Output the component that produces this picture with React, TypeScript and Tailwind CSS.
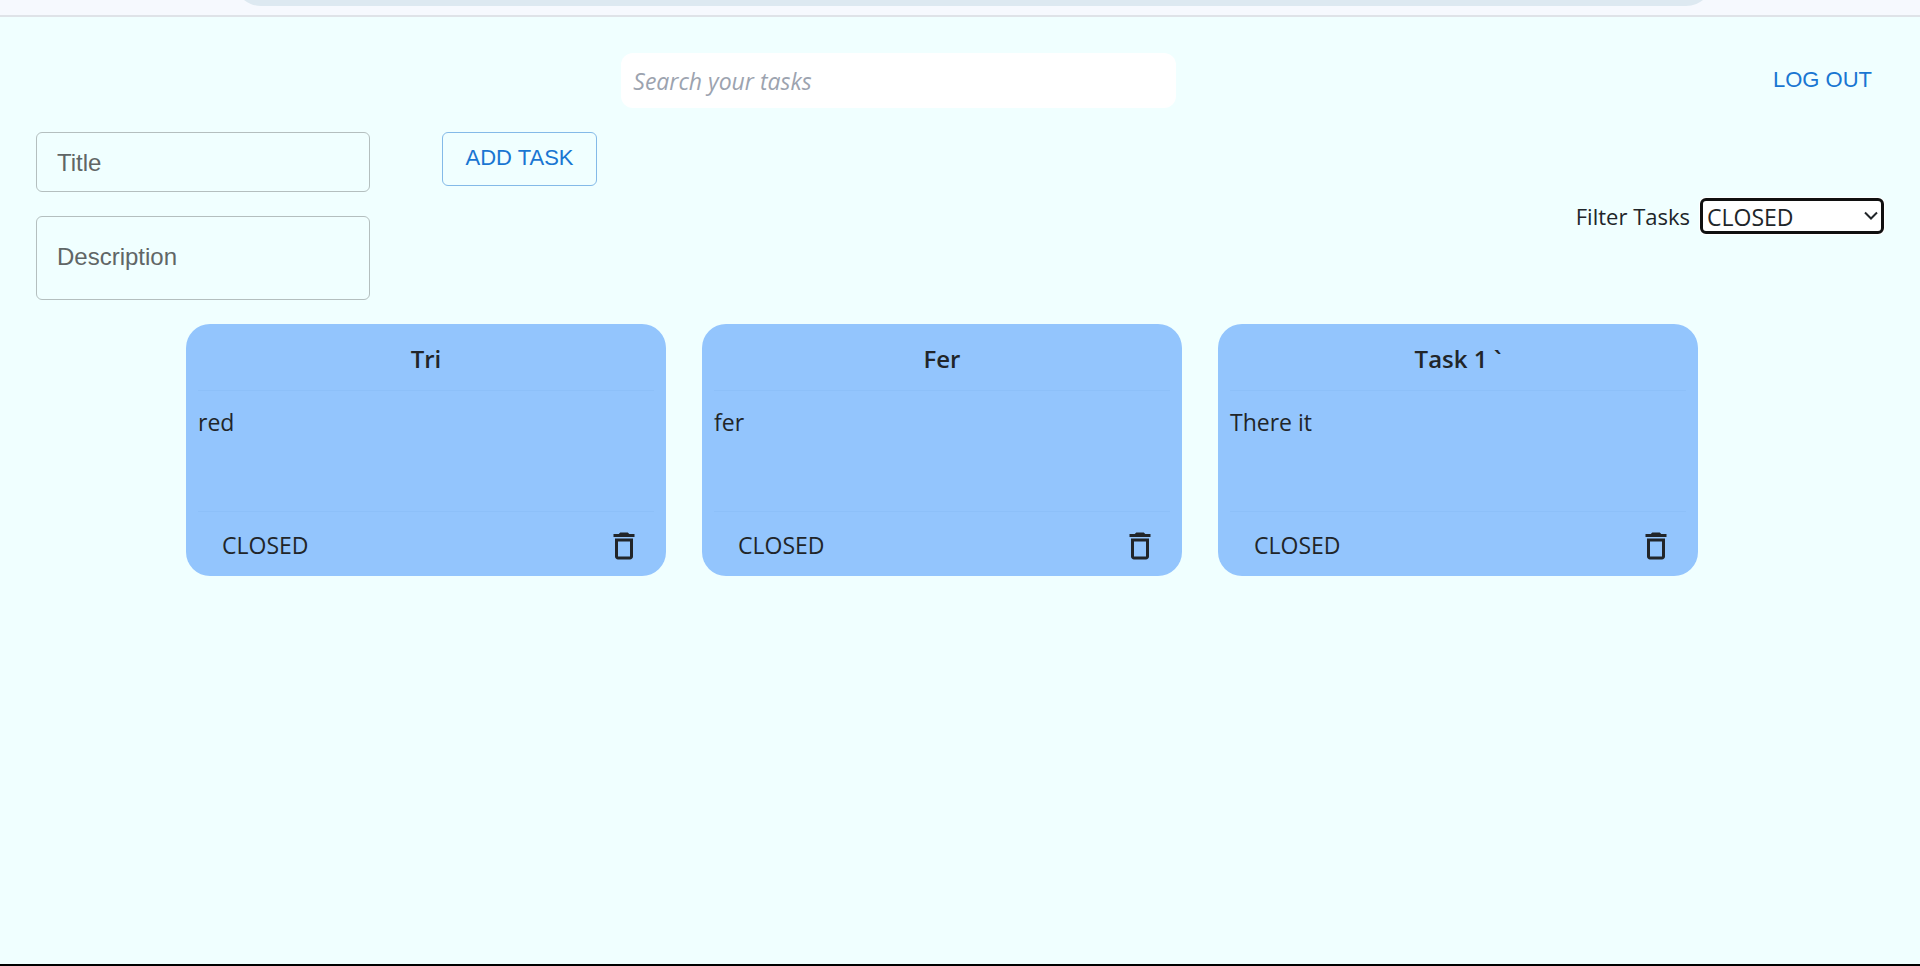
import { useState } from "react";

type Task = { title: string; description: string; status: string };

const initialTasks: Task[] = [
  { title: "Tri", description: "red", status: "CLOSED" },
  { title: "Fer", description: "fer", status: "CLOSED" },
  { title: "Task 1 `", description: "There it", status: "CLOSED" },
];

function TrashIcon() {
  return (
    <svg viewBox="0 0 24 24" fill="currentColor" className="size-9" aria-hidden="true">
      <path d="M6 19c0 1.1.9 2 2 2h8c1.1 0 2-.9 2-2V7H6zM8 9h8v10H8zm7.5-5-1-1h-5l-1 1H5v2h14V4z" />
    </svg>
  );
}

function BrowserEdge() {
  return (
    <div className="h-[17px] border-b-2 border-[#dfe3e8] bg-[#f6f9fe] pr-[207px] pl-[234px]">
      <div className="h-1.5 overflow-hidden">
        <div className="-mt-12 h-[54px] rounded-full bg-[#dde9f1]" />
      </div>
    </div>
  );
}

function TaskCard({ task, onDelete }: { task: Task; onDelete: () => void }) {
  return (
    <article className="flex h-[252px] w-[480px] flex-col rounded-3xl bg-[#93c5fd] px-3">
      <h2 className="flex h-[66px] items-center justify-center pt-1 text-2xl font-semibold">
        {task.title}
      </h2>
      <p className="flex-1 border-y border-[#8dc0f9] pt-[15px] text-[23px] leading-8">{task.description}</p>
      <div className="flex h-16 items-center justify-between pr-3 pl-6 text-[23px] leading-9">
        <span className="pt-0.5">{task.status}</span>
        <button type="button" aria-label="Delete" onClick={onDelete} className="cursor-pointer pt-1">
          <TrashIcon />
        </button>
      </div>
    </article>
  );
}

export default function App() {
  const [tasks, setTasks] = useState(initialTasks);
  const [title, setTitle] = useState("");
  const [description, setDescription] = useState("");
  const [search, setSearch] = useState("");
  const [filter, setFilter] = useState("CLOSED");

  const addTask = () => {
    if (!title) return;
    setTasks([...tasks, { title, description, status: "OPEN" }]);
    setTitle("");
    setDescription("");
  };

  const visible = tasks.filter(
    (t) =>
      (filter === "ALL" || t.status === filter) &&
      t.title.toLowerCase().includes(search.toLowerCase()),
  );

  return (
    <div className="flex min-h-screen flex-col border-b-2 border-black bg-[#f0ffff] font-['Segoe_UI','Open_Sans',sans-serif] text-[#212529]">
      <BrowserEdge />

      <header className="flex items-start justify-between px-9 pt-9">
        <div />
        <input
          type="search"
          aria-label="Search your tasks"
          placeholder="Search your tasks"
          value={search}
          onChange={(e) => setSearch(e.target.value)}
          className="h-[55px] w-3/10 rounded-xl bg-white px-3 text-[23px] outline-none placeholder:text-[#9ca3af] placeholder:italic"
        />
        <button
          type="button"
          className="h-[54px] cursor-pointer px-3 pb-0.5 font-['Liberation_Sans',Arial,sans-serif] text-[22px] text-[#1976d2]"
        >
          LOG OUT
        </button>
      </header>

      <section className="flex items-start justify-between px-9 pt-6">
        <form
          className="flex items-start gap-[72px] font-['Liberation_Sans',Arial,sans-serif]"
          onSubmit={(e) => {
            e.preventDefault();
            addTask();
          }}
        >
          <div className="flex w-[334px] flex-col gap-6">
            <input
              aria-label="Title"
              placeholder="Title"
              value={title}
              onChange={(e) => setTitle(e.target.value)}
              className="h-[60px] rounded-md border border-[#b4bfbf] px-5 pt-0.5 text-2xl outline-none placeholder:text-[#606666]"
            />
            <textarea
              aria-label="Description"
              placeholder="Description"
              rows={1}
              value={description}
              onChange={(e) => setDescription(e.target.value)}
              className="h-[84px] resize-none rounded-md border border-[#b4bfbf] px-5 py-6 text-2xl leading-8 outline-none placeholder:text-[#606666]"
            />
          </div>
          <button
            type="submit"
            className="h-[54px] w-[155px] cursor-pointer rounded-md border border-[#84bae8] pb-1 text-[22px] text-[#1976d2]"
          >
            ADD TASK
          </button>
        </form>

        <div className="flex items-center gap-2.5 pt-[66px]">
          <label htmlFor="filter" className="text-[22px]">
            Filter Tasks
          </label>
          <div className="grid items-center">
            <select
              id="filter"
              value={filter}
              onChange={(e) => setFilter(e.target.value)}
              className="col-start-1 row-start-1 h-9 w-[184px] appearance-none rounded-md border-3 border-[#101010] bg-white pt-0.5 pl-1 text-[23px] leading-7 ring-1 ring-white outline-none"
            >
              <option value="ALL">ALL</option>
              <option value="OPEN">OPEN</option>
              <option value="CLOSED">CLOSED</option>
            </select>
            <svg
              viewBox="0 0 14 10"
              fill="none"
              stroke="currentColor"
              strokeWidth="2"
              className="pointer-events-none col-start-1 row-start-1 mr-1.5 h-2.5 w-3.5 justify-self-end"
              aria-hidden="true"
            >
              <path d="M1 1.5 7 7.5 13 1.5" />
            </svg>
          </div>
        </div>
      </section>

      <main className="flex flex-wrap justify-center gap-9 pt-6 pr-9">
        {visible.map((task) => (
          <TaskCard
            key={task.title}
            task={task}
            onDelete={() => setTasks(tasks.filter((t) => t !== task))}
          />
        ))}
      </main>
    </div>
  );
}
